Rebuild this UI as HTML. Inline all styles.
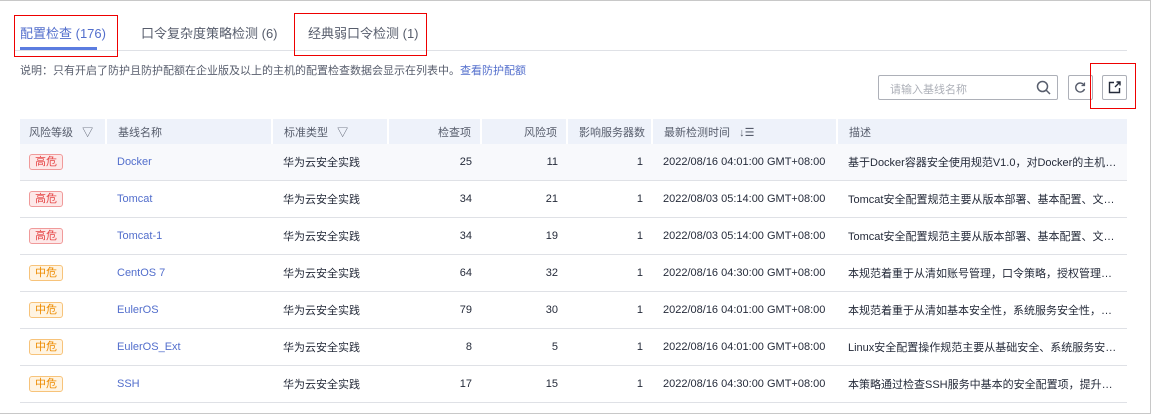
<!DOCTYPE html><html><head><meta charset="utf-8"><style>
body{margin:0;width:1152px;height:414px;background:#fff;font-family:"Liberation Sans","Noto Sans CJK SC",sans-serif;font-size:11px;color:#252b3a;position:relative;overflow:hidden}
.frame{position:absolute;left:0;top:0;width:1150px;height:412px;border:1px solid #c8c8c8;border-left:none}
.abs{position:absolute}
.tab{position:absolute;top:23px;font-size:13px;color:#575d6c}
.red{position:absolute;border:1px solid #e00}
table{position:absolute;left:20px;top:119px;width:1107px;border-collapse:collapse;table-layout:fixed}
th{background:#eef2fa;height:25px;font-weight:normal;color:#575d6c;text-align:left;padding:0 9px 0 11px;border-right:2px solid #fff;white-space:nowrap}
td{height:36px;border-bottom:1px solid #dfe1e6;padding:0 9px 0 11px;white-space:nowrap;overflow:hidden;text-overflow:ellipsis}
th:first-child,td:first-child{padding-left:9px}
.r{text-align:right}
.ln{color:#526ecc}
.tag{display:inline-block;border:1px solid;border-radius:3px;padding:0 5px;line-height:14px;font-size:11px}
.h{color:#e54545;background:#fde8e8;border-color:#f09a9a}
.m{color:#ed8b00;background:#fff4e2;border-color:#f7c37a}
.btn{position:absolute;top:75px;width:23px;height:23px;border:1px solid #adb0b8;border-radius:2px}
</style></head><body>
<div class="frame"></div>
<div class="tab" style="left:20px;color:#526ecc">配置检查 (176)</div>
<div class="abs" style="left:20px;top:47px;width:77px;height:3px;background:#5b7ce0"></div>
<div class="tab" style="left:141px">口令复杂度策略检测 (6)</div>
<div class="tab" style="left:308px">经典弱口令检测 (1)</div>
<div class="abs" style="left:14px;top:50px;width:1113px;height:1px;background:#dfe1e6"></div>
<div class="red" style="left:14px;top:15px;width:102px;height:40px"></div>
<div class="red" style="left:294px;top:13px;width:131px;height:41px"></div>
<div class="abs" style="left:20px;top:62px;font-size:11px;color:#575d6c">说明：只有开启了防护且防护配额在企业版及以上的主机的配置检查数据会显示在列表中。<span style="color:#526ecc">查看防护配额</span></div>
<div class="abs" style="left:878px;top:75px;width:178px;height:23px;border:1px solid #adb0b8;border-radius:2px"><span style="position:absolute;left:11px;top:5px;color:#adb0b8">请输入基线名称</span>
<svg style="position:absolute;right:6px;top:4px" width="15" height="15" viewBox="0 0 15 15"><circle cx="6.5" cy="6.5" r="5" fill="none" stroke="#575d6c" stroke-width="1.5"/><path d="M10 10l4 4" stroke="#575d6c" stroke-width="1.5"/></svg></div>
<div class="btn" style="left:1068px"><svg width="23" height="23" viewBox="0 0 23 23"><path d="M15 9A4.5 4.5 0 1 0 15.5 13" fill="none" stroke="#575d6c" stroke-width="1.4"/><path d="M15.5 6.5v3h-3" fill="none" stroke="#575d6c" stroke-width="1.2"/></svg></div>
<div class="btn" style="left:1102px"><svg width="23" height="23" viewBox="0 0 23 23"><path d="M11 6.5H6.5v10h10V12" fill="none" stroke="#252b3a" stroke-width="1.4"/><path d="M12 11l5-5M13.5 6h3.5v3.5" fill="none" stroke="#252b3a" stroke-width="1.4"/></svg></div>
<div class="red" style="left:1090px;top:63px;width:44px;height:44px"></div>
<table>
<colgroup><col style="width:86px"><col style="width:166px"><col style="width:116px"><col style="width:93px"><col style="width:86px"><col style="width:85px"><col style="width:185px"><col></colgroup>
<tr><th>风险等级 <span style="margin-left:6px">▽</span></th><th>基线名称</th><th>标准类型 <span style="margin-left:6px">▽</span></th><th class="r">检查项</th><th class="r">风险项</th><th class="r">影响服务器数</th><th>最新检测时间 <span style="margin-left:6px">↓☰</span></th><th style="border-right:none">描述</th></tr>
<tr style="background:#f8f9fc"><td><span class="tag h">高危</span></td><td class="ln">Docker</td><td>华为云安全实践</td><td class="r">25</td><td class="r">11</td><td class="r">1</td><td>2022/08/16 04:01:00 GMT+08:00</td><td>基于Docker容器安全使用规范V1.0，对Docker的主机配置进行检查</td></tr>
<tr><td><span class="tag h">高危</span></td><td class="ln">Tomcat</td><td>华为云安全实践</td><td class="r">34</td><td class="r">21</td><td class="r">1</td><td>2022/08/03 05:14:00 GMT+08:00</td><td>Tomcat安全配置规范主要从版本部署、基本配置、文件权限</td></tr>
<tr><td><span class="tag h">高危</span></td><td class="ln">Tomcat-1</td><td>华为云安全实践</td><td class="r">34</td><td class="r">19</td><td class="r">1</td><td>2022/08/03 05:14:00 GMT+08:00</td><td>Tomcat安全配置规范主要从版本部署、基本配置、文件权限</td></tr>
<tr><td><span class="tag m">中危</span></td><td class="ln">CentOS 7</td><td>华为云安全实践</td><td class="r">64</td><td class="r">32</td><td class="r">1</td><td>2022/08/16 04:30:00 GMT+08:00</td><td>本规范着重于从清如账号管理，口令策略，授权管理等方面</td></tr>
<tr><td><span class="tag m">中危</span></td><td class="ln">EulerOS</td><td>华为云安全实践</td><td class="r">79</td><td class="r">30</td><td class="r">1</td><td>2022/08/16 04:01:00 GMT+08:00</td><td>本规范着重于从清如基本安全性，系统服务安全性，文件权限</td></tr>
<tr><td><span class="tag m">中危</span></td><td class="ln">EulerOS_Ext</td><td>华为云安全实践</td><td class="r">8</td><td class="r">5</td><td class="r">1</td><td>2022/08/16 04:01:00 GMT+08:00</td><td>Linux安全配置操作规范主要从基础安全、系统服务安全等</td></tr>
<tr><td><span class="tag m">中危</span></td><td class="ln">SSH</td><td>华为云安全实践</td><td class="r">17</td><td class="r">15</td><td class="r">1</td><td>2022/08/16 04:30:00 GMT+08:00</td><td>本策略通过检查SSH服务中基本的安全配置项，提升SSH服务</td></tr>
</table>
</body></html>
